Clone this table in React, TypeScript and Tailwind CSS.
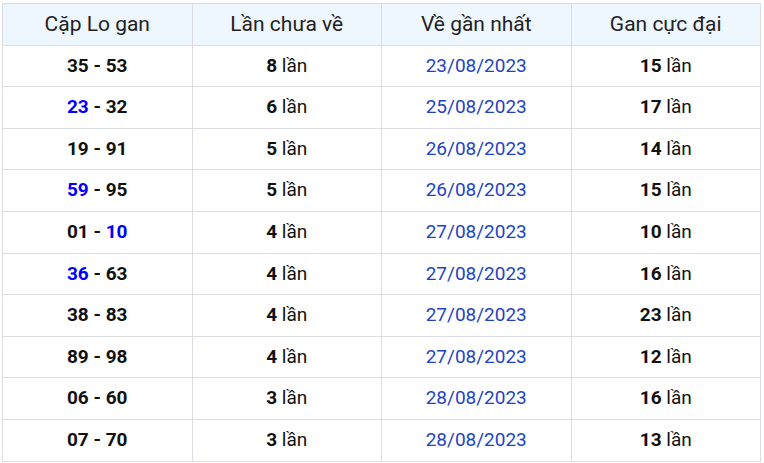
import React from "react";

type Row = { a: string; b: string; hl: "a" | "b" | null; n: number; date: string; max: number };

const rows: Row[] = [
  { a: "35", b: "53", hl: null, n: 8, date: "23/08/2023", max: 15 },
  { a: "23", b: "32", hl: "a", n: 6, date: "25/08/2023", max: 17 },
  { a: "19", b: "91", hl: null, n: 5, date: "26/08/2023", max: 14 },
  { a: "59", b: "95", hl: "a", n: 5, date: "26/08/2023", max: 15 },
  { a: "01", b: "10", hl: "b", n: 4, date: "27/08/2023", max: 10 },
  { a: "36", b: "63", hl: "a", n: 4, date: "27/08/2023", max: 16 },
  { a: "38", b: "83", hl: null, n: 4, date: "27/08/2023", max: 23 },
  { a: "89", b: "98", hl: null, n: 4, date: "27/08/2023", max: 12 },
  { a: "06", b: "60", hl: null, n: 3, date: "28/08/2023", max: 16 },
  { a: "07", b: "70", hl: null, n: 3, date: "28/08/2023", max: 13 },
];

export default function App() {
  const cell = "border border-[#dcdce3] text-center align-middle h-[41.6px] p-0";
  return (
    <div className="pl-[2px] pt-[3px] bg-white min-h-[463px]" style={{ fontFamily: "Roboto, 'Liberation Sans', sans-serif" }}>
      <table className="w-[759px] border-collapse table-fixed text-[19px] text-[#111]">
        <thead>
          <tr className="bg-[#eef6fe]">
            <th className={`${cell} font-normal text-[21px] text-[#222]`}>Cặp Lo gan</th>
            <th className={`${cell} font-normal text-[21px] text-[#222]`}>Lần chưa về</th>
            <th className={`${cell} font-normal text-[21px] text-[#222]`}>Về gần nhất</th>
            <th className={`${cell} font-normal text-[21px] text-[#222]`}>Gan cực đại</th>
          </tr>
        </thead>
        <tbody>
          {rows.map((r, i) => (
            <tr key={i}>
              <td className={`${cell} font-bold`}>
                <span className={r.hl === "a" ? "text-[#0000ff]" : ""}>{r.a}</span>
                {" - "}
                <span className={r.hl === "b" ? "text-[#0000ff]" : ""}>{r.b}</span>
              </td>
              <td className={cell}>
                <span className="font-bold">{r.n}</span> lần
              </td>
              <td className={`${cell} text-[#1f43c4]`}>{r.date}</td>
              <td className={cell}>
                <span className="font-bold">{r.max}</span> lần
              </td>
            </tr>
          ))}
        </tbody>
      </table>
    </div>
  );
}
